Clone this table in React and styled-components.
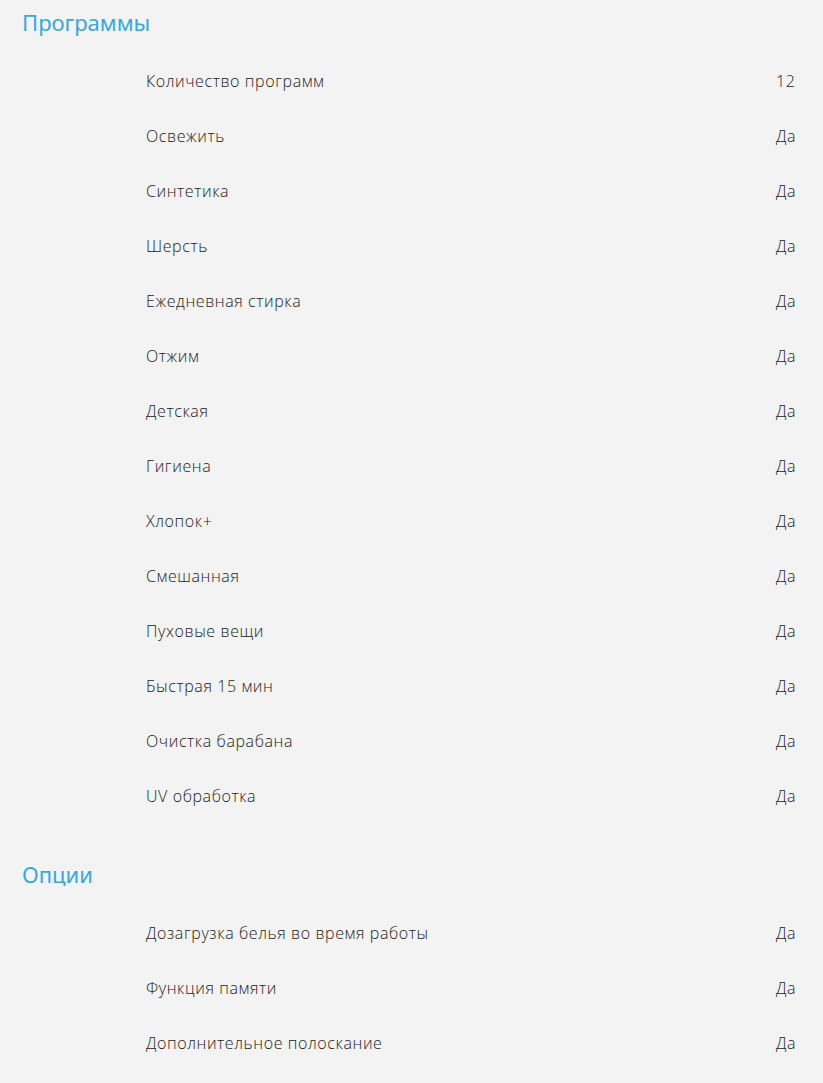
import styled, { createGlobalStyle } from "styled-components";

const programs = [
  ["Количество программ", "12"],
  ["Освежить", "Да"],
  ["Синтетика", "Да"],
  ["Шерсть", "Да"],
  ["Ежедневная стирка", "Да"],
  ["Отжим", "Да"],
  ["Детская", "Да"],
  ["Гигиена", "Да"],
  ["Хлопок+", "Да"],
  ["Смешанная", "Да"],
  ["Пуховые вещи", "Да"],
  ["Быстрая 15 мин", "Да"],
  ["Очистка барабана", "Да"],
  ["UV обработка", "Да"],
];

const options = [
  ["Дозагрузка белья во время работы", "Да"],
  ["Функция памяти", "Да"],
  ["Дополнительное полоскание", "Да"],
];

function Section({ title, rows, first }) {
  return (
    <Block $first={first}>
      <Heading>{title}</Heading>
      <List>
        {rows.map(([name, value]) => (
          <Row key={name}>
            <Name>{name}</Name>
            <Value>{value}</Value>
          </Row>
        ))}
      </List>
    </Block>
  );
}

function App() {
  return (
    <>
      <GlobalStyle />
      <Page>
        <Section title="Программы" rows={programs} first />
        <Section title="Опции" rows={options} />
      </Page>
    </>
  );
}

const GlobalStyle = createGlobalStyle`
  body {
    margin: 0;
    background: #f3f3f3;
    font-family: "Open Sans", "Noto Sans", sans-serif;
  }
`;

const Page = styled.div`
  padding: 0 0 0 22px;
  min-height: 1083px;
  box-sizing: border-box;
`;

const Block = styled.section`
  margin-top: ${(p) => (p.$first ? "0" : "29px")};
`;

const Heading = styled.h2`
  margin: 0;
  font: 400 22px/44px "Noto Sans", sans-serif;
  color: #35a8de;
`;

const List = styled.div`
  margin-top: 9px;
  display: flex;
  flex-direction: column;
`;

const Row = styled.div`
  display: grid;
  grid-template-columns: 1fr 47px;
  align-items: center;
  height: 55px;
  padding-left: 124px;
  font: 300 16px/20px "Open Sans", "Noto Sans", sans-serif;
  letter-spacing: 0.6px;
  color: #222;
`;

const Name = styled.span``;

const Value = styled.span``;

export default App;
